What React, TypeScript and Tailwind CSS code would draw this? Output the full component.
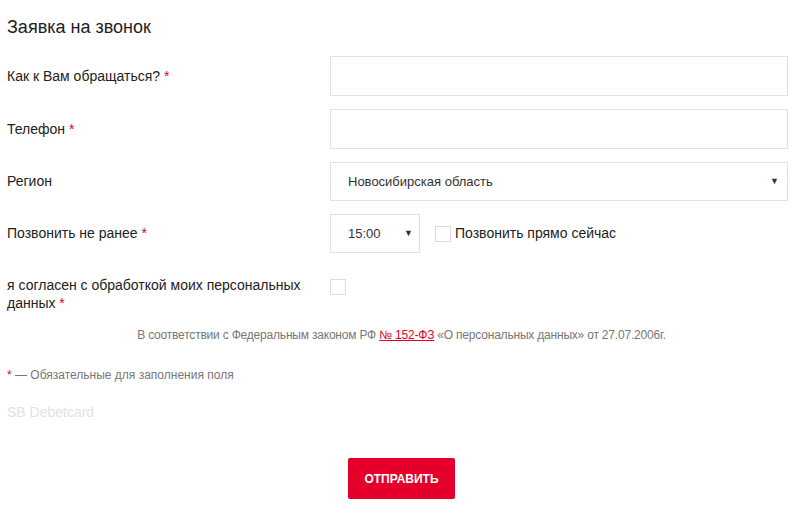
export default function App() {
  const star = <span className="text-[#e4002b]">{"\u00a0*"}</span>;

  return (
    <div className="w-[800px] h-[515px] bg-white font-['Liberation_Sans',Arial,sans-serif] text-[#222] overflow-hidden">
      <h2 className="pl-[7px] pt-[16px] text-[18px] leading-[22px] text-[#222]">
        Заявка на звонок
      </h2>

      <div className="mt-[18px] flex flex-col gap-[13px] pl-[7px] pr-[12px]">
        <div className="flex items-center">
          <label className="w-[323px] text-[14px]">
            Как к Вам обращаться?{star}
          </label>
          <input className="flex-1 h-[40px] border border-[#e2e2e2] outline-none" />
        </div>

        <div className="flex items-center">
          <label className="w-[323px] text-[14px]">Телефон{star}</label>
          <input className="flex-1 h-[40px] border border-[#e2e2e2] outline-none" />
        </div>

        <div className="flex items-center">
          <label className="w-[323px] text-[14px]">Регион</label>
          <div className="flex-1 h-[39px] border border-[#e2e2e2] flex items-center justify-between pl-[17px] pr-[8px] text-[13px] text-[#333]">
            <span>Новосибирская область</span>
            <span className="text-[9px] text-[#333]">▼</span>
          </div>
        </div>

        <div className="flex items-center">
          <label className="w-[323px] text-[14px]">
            Позвонить не ранее{star}
          </label>
          <div className="w-[90px] h-[39px] border border-[#e2e2e2] flex items-center justify-between pl-[17px] pr-[6px] text-[13px] text-[#333]">
            <span>15:00</span>
            <span className="text-[9px]">▼</span>
          </div>
          <div className="ml-[15px] w-[16px] h-[16px] border border-[#dcdcdc]" />
          <span className="ml-[4px] text-[14px]">Позвонить прямо сейчас</span>
        </div>
      </div>

      <div className="mt-[23px] flex items-start pl-[7px]">
        <label className="w-[323px] text-[14px] leading-[18px] pr-[20px]">
          я согласен с обработкой моих персональных данных{star}
        </label>
        <div className="mt-[3px] w-[16px] h-[16px] border border-[#dcdcdc]" />
      </div>

      <p className="mt-[15px] pl-[3px] text-center text-[12px] leading-[16px] tracking-[-0.2px] text-[#777]">
        В соответствии с Федеральным законом РФ{" "}
        <a className="text-[#e4002b] underline">№ 152-ФЗ</a> «О персональных
        данных» от 27.07.2006г.
      </p>

      <p className="mt-[24px] pl-[7px] text-[12px] leading-[16px] text-[#777]">
        <span className="text-[#e4002b]">*</span> — Обязательные для заполнения
        поля
      </p>

      <p className="mt-[20px] pl-[7px] text-[14px] leading-[18px] text-[#e2e2e2]">
        SB Debetcard
      </p>

      <div className="mt-[37px] flex justify-center pl-[3px]">
        <button className="w-[107px] h-[41px] rounded-[2px] bg-[#e4002b] text-white text-[12px] font-bold uppercase">
          Отправить
        </button>
      </div>
    </div>
  );
}
